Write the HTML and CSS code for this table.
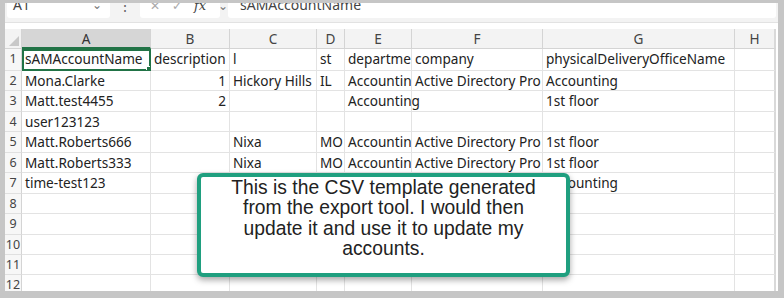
FILE: index.html
```html
<!DOCTYPE html>
<html lang="en">
<head>
  <meta charset="UTF-8" />
  <title>accounts.csv</title>
  <link rel="stylesheet" href="styles.css">
</head>
<body>

<div class="window">
  <div class="formula-bar">
    <div class="fb-row">
      <div class="name-box">A1 <span class="chev">&#8964;</span></div>
      <div class="fb-dots">&#8942;</div>
      <div class="fb-buttons"><span>&#10005;</span><span>&#10003;</span><span class="fx">fx</span><span class="chev-sm">&#8964;</span></div>
      <div class="fb-input">sAMAccountName</div>
    </div>
  </div>

  <div class="sheet">
    <div class="corner"><svg width="10" height="10" viewBox="0 0 10 10"><polygon points="10,0 10,10 0,10" fill="#c8c8c8"/></svg></div>
    <div class="col-head sel">A</div>
    <div class="col-head">B</div>
    <div class="col-head">C</div>
    <div class="col-head">D</div>
    <div class="col-head">E</div>
    <div class="col-head">F</div>
    <div class="col-head">G</div>
    <div class="col-head last">H</div>

    <div class="row-head">1</div>
    <div class="cell active">sAMAccountName</div>
    <div class="cell">description</div>
    <div class="cell">l</div>
    <div class="cell">st</div>
    <div class="cell">department</div>
    <div class="cell">company</div>
    <div class="cell">physicalDeliveryOfficeName</div>
    <div class="cell last"></div>

    <div class="row-head">2</div>
    <div class="cell">Mona.Clarke</div>
    <div class="cell num">1</div>
    <div class="cell">Hickory Hills</div>
    <div class="cell">IL</div>
    <div class="cell">Accounting</div>
    <div class="cell">Active Directory Pro</div>
    <div class="cell">Accounting</div>
    <div class="cell last"></div>

    <div class="row-head">3</div>
    <div class="cell">Matt.test4455</div>
    <div class="cell num">2</div>
    <div class="cell"></div>
    <div class="cell"></div>
    <div class="cell spill">Accounting</div>
    <div class="cell"></div>
    <div class="cell">1st floor</div>
    <div class="cell last"></div>

    <div class="row-head">4</div>
    <div class="cell">user123123</div>
    <div class="cell"></div>
    <div class="cell"></div>
    <div class="cell"></div>
    <div class="cell"></div>
    <div class="cell"></div>
    <div class="cell"></div>
    <div class="cell last"></div>

    <div class="row-head">5</div>
    <div class="cell">Matt.Roberts666</div>
    <div class="cell"></div>
    <div class="cell">Nixa</div>
    <div class="cell">MO</div>
    <div class="cell">Accounting</div>
    <div class="cell">Active Directory Pro</div>
    <div class="cell">1st floor</div>
    <div class="cell last"></div>

    <div class="row-head">6</div>
    <div class="cell">Matt.Roberts333</div>
    <div class="cell"></div>
    <div class="cell">Nixa</div>
    <div class="cell">MO</div>
    <div class="cell">Accounting</div>
    <div class="cell">Active Directory Pro</div>
    <div class="cell">1st floor</div>
    <div class="cell last"></div>

    <div class="row-head">7</div>
    <div class="cell">time-test123</div>
    <div class="cell"></div>
    <div class="cell"></div>
    <div class="cell"></div>
    <div class="cell"></div>
    <div class="cell"></div>
    <div class="cell">Accounting</div>
    <div class="cell last"></div>

    <div class="row-head">8</div>
    <div class="cell"></div><div class="cell"></div><div class="cell"></div><div class="cell"></div>
    <div class="cell"></div><div class="cell"></div><div class="cell"></div><div class="cell last"></div>

    <div class="row-head">9</div>
    <div class="cell"></div><div class="cell"></div><div class="cell"></div><div class="cell"></div>
    <div class="cell"></div><div class="cell"></div><div class="cell"></div><div class="cell last"></div>

    <div class="row-head">10</div>
    <div class="cell"></div><div class="cell"></div><div class="cell"></div><div class="cell"></div>
    <div class="cell"></div><div class="cell"></div><div class="cell"></div><div class="cell last"></div>

    <div class="row-head">11</div>
    <div class="cell"></div><div class="cell"></div><div class="cell"></div><div class="cell"></div>
    <div class="cell"></div><div class="cell"></div><div class="cell"></div><div class="cell last"></div>

    <div class="row-head">12</div>
    <div class="cell"></div><div class="cell"></div><div class="cell"></div><div class="cell"></div>
    <div class="cell"></div><div class="cell"></div><div class="cell"></div><div class="cell last"></div>
  </div>

  <div class="callout">
    This is the CSV template generated from the export tool. I would then update it and use it to update my accounts.
  </div>
</div>

</body>
</html>
```

FILE: styles.css
```css
body {
  margin: 0;
  background: #c6c6c6;
  overflow: hidden;
}
.window {
  position: relative;
  margin: 3px 6px 0 5px;
  height: 288px;
  background: #fff;
  overflow: hidden;
  font-family: "Noto Sans", sans-serif;
}

/* formula bar, scrolled half out of view */
.formula-bar {
  height: 19px;
  overflow: hidden;
  background: #f3f3f3;
  border-bottom: 1px solid #e2e2e2;
}
.fb-row {
  display: flex;
  align-items: center;
  margin-top: -12px;
  height: 28px;
  gap: 8px;
  padding-left: 2px;
  font-size: 14px;
  color: #444;
}
.name-box {
  width: 103px;
  height: 26px;
  line-height: 26px;
  background: #fff;
  border-radius: 3px;
  padding: 0 8px 0 6px;
  display: flex;
  justify-content: space-between;
  box-sizing: border-box;
}
.chev, .chev-sm {
  color: #777;
  font-size: 12px;
}
.fb-dots {
  width: 14px;
  text-align: center;
  color: #666;
}
.fb-buttons {
  width: 80px;
  height: 26px;
  background: #fff;
  border-radius: 3px;
  display: flex;
  align-items: center;
  gap: 12px;
  padding-left: 10px;
  box-sizing: border-box;
  color: #aaa;
  font-size: 12px;
}
.fb-buttons .fx {
  color: #444;
  font-style: italic;
  font-family: "DejaVu Serif", serif;
  font-size: 13px;
}
.fb-input {
  flex: 1;
  height: 26px;
  line-height: 26px;
  background: #fff;
  border-radius: 3px;
  padding-left: 12px;
  margin-right: 2px;
}

/* worksheet grid */
.sheet {
  margin-top: 6px;
  display: grid;
  grid-template-columns: 17px 129px 79px 87px 28px 67px 131px 192px 41px;
  grid-template-rows: 20px 22px repeat(11, 20.45px);
  font-size: 13.6px;
  color: #222;
}
.corner {
  background: #f3f3f3;
  border-right: 1px solid #d4d4d4;
  border-bottom: 1px solid #d4d4d4;
  display: flex;
  align-items: flex-end;
  justify-content: flex-end;
  padding: 0 2px 2px 0;
}
.col-head {
  background: #f3f3f3;
  border-right: 1px solid #d4d4d4;
  border-bottom: 1px solid #d4d4d4;
  text-align: center;
  line-height: 20px;
  color: #444;
}
.col-head.sel {
  background: #d6d6d6;
  border-bottom: 2px solid #217346;
  color: #333;
}
.col-head.last, .cell.last {
  border-right: 2px solid #d9d9d9;
}
.row-head {
  background: #f7f7f7;
  border-right: 1px solid #d4d4d4;
  border-bottom: 1px solid #e0e0e0;
  text-align: center;
  line-height: 20px;
  color: #444;
  font-size: 12.5px;
}
.cell {
  border-right: 1px solid #e3e3e3;
  border-bottom: 1px solid #e3e3e3;
  padding: 0 3px;
  line-height: 20px;
  white-space: nowrap;
  overflow: hidden;
}
.cell.num {
  text-align: right;
}
.cell.spill {
  overflow: visible;
}
.cell.active {
  outline: 2px solid #217346;
  outline-offset: -2px;
  position: relative;
}
.cell.active::after {
  content: "";
  position: absolute;
  right: -3px;
  bottom: -3px;
  width: 5px;
  height: 5px;
  background: #217346;
  border: 1px solid #fff;
}

/* note laid over the sheet */
.callout {
  position: absolute;
  left: 192px;
  top: 170px;
  width: 373px;
  height: 104px;
  box-sizing: border-box;
  background: #fff;
  border: 4px solid #1f9f7f;
  border-radius: 6px;
  box-shadow: 0 3px 6px rgba(0, 0, 0, 0.35);
  font-family: "Liberation Sans", Arial, sans-serif;
  font-size: 19.3px;
  line-height: 20.4px;
  color: #222;
  text-align: center;
  padding: 1px 22px 0;
}
```
